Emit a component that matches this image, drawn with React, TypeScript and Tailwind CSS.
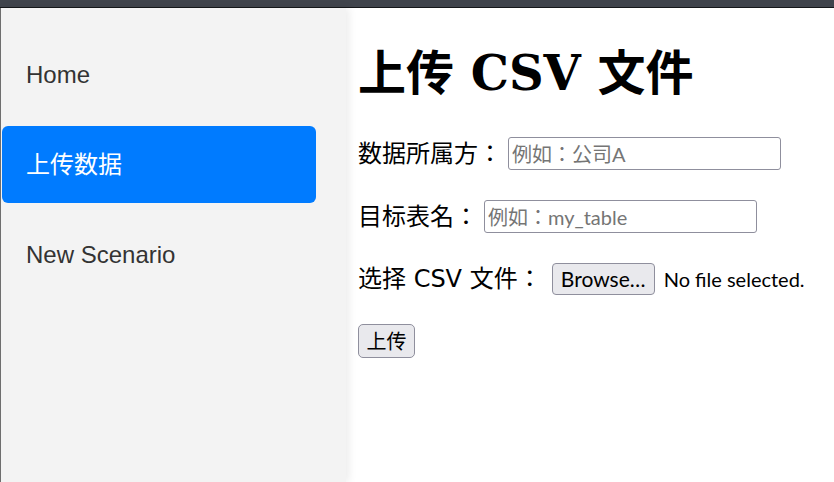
import React from "react";

function NavItem({ label, active }: { label: string; active?: boolean }) {
  return (
    <div
      className={
        active
          ? "h-[77px] flex items-center pl-[24px] text-[24px] text-white bg-[#007bff] rounded-[6px] font-['Liberation_Sans','Noto_Sans_CJK_JP',sans-serif]"
          : "h-[77px] flex items-center pl-[24px] text-[24px] text-[#333333] font-['Liberation_Sans','Noto_Sans_CJK_JP',sans-serif]"
      }
    >
      {label}
    </div>
  );
}

function TextField({ label, placeholder }: { label: string; placeholder: string }) {
  return (
    <div className="h-[33px] flex items-center">
      <span className="text-[24px] font-['DejaVu_Sans','Noto_Sans_CJK_JP',sans-serif]">{label}</span>
      <input
        className="ml-[6px] w-[273px] h-[33px] border border-[#8f8f9d] rounded-[3px] px-[3px] text-[20px] placeholder:text-[#757575] outline-none font-['Lato','Noto_Sans_CJK_JP',sans-serif]"
        placeholder={placeholder}
      />
    </div>
  );
}

export default function App() {
  return (
    <div className="w-[834px] h-[482px] overflow-hidden bg-white flex flex-col">
      <div className="h-[7px] bg-[#40444c] shrink-0" />
      <div className="h-[1px] bg-[#15171a] shrink-0" />
      <div className="flex flex-1 min-h-0">
        <aside className="w-[346px] shrink-0 bg-[#f3f3f3] border-l border-[#6e6e6e] pl-[1px] pr-[30px] pt-[28px] flex flex-col gap-[13px] shadow-[3px_0_8px_rgba(0,0,0,0.08)] relative z-10">
          <NavItem label="Home" />
          <NavItem label="上传数据" active />
          <NavItem label="New Scenario" />
        </aside>
        <main className="flex-1 pl-[12px] pt-[36px] flex flex-col items-start gap-[30px] text-black">
          <h1 className="h-[58px] leading-[58px] text-[48px] font-bold mb-[5px] font-['DejaVu_Serif','Noto_Sans_CJK_JP',serif]">
            上传 CSV 文件
          </h1>
          <TextField label="数据所属方：" placeholder="例如：公司A" />
          <TextField label="目标表名：" placeholder="例如：my_table" />
          <div className="h-[32px] flex items-center">
            <span className="text-[24px] font-['DejaVu_Sans','Noto_Sans_CJK_JP',sans-serif]">选择 CSV 文件：</span>
            <button className="ml-[10px] w-[103px] h-[32px] bg-[#e9e9ed] border border-[#8f8f9d] rounded-[4px] text-[21px] flex items-center justify-center font-['Lato',sans-serif]">
              Browse…
            </button>
            <span className="ml-[9px] text-[20px] font-['Lato',sans-serif]">No file selected.</span>
          </div>
          <button className="-mt-[1px] w-[57px] h-[34px] bg-[#e9e9ed] border border-[#8f8f9d] rounded-[5px] text-[20px] flex items-center justify-center font-['Noto_Sans_CJK_JP',sans-serif]">
            上传
          </button>
        </main>
      </div>
    </div>
  );
}
